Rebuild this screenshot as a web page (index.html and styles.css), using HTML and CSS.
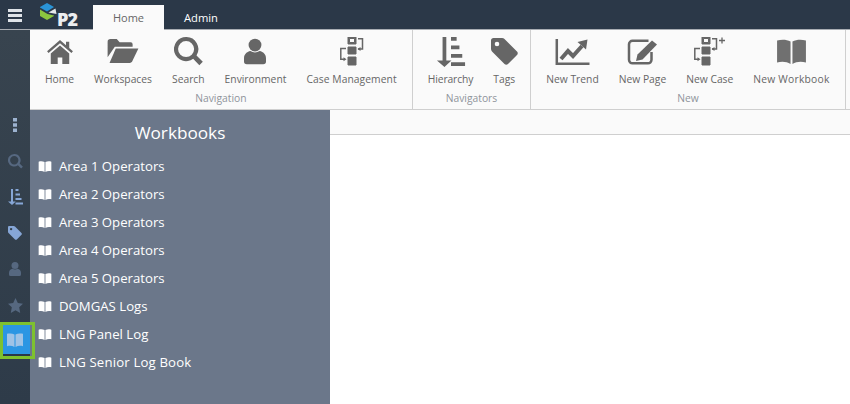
FILE: index.html
```html
<!DOCTYPE html>
<html lang="en">
<head>
<meta charset="utf-8">
<title>P2 Workbooks</title>
<link rel="stylesheet" href="styles.css">
</head>
<body>
<svg class="defs" width="0" height="0" aria-hidden="true">
  <defs>
    <symbol id="i-book" viewBox="0 0 30 26">
      <path d="M0 1.500C5 .3 10 .5 14 2.500V26C10 23.500 5 23 0 24.500ZM30 1.500C25 .3 20 .5 16 2.500V26C20 23.500 25 23 30 24.500Z"/>
    </symbol>
    <symbol id="i-search" viewBox="0 0 30 30">
      <path d="M12.500 0a12.500 12.500 0 1 0 7.300 22.600l6.400 6.600 3.600-3.600-6.500-6.500A12.500 12.500 0 0 0 12.500 0Zm0 4.200a8.300 8.300 0 1 1 0 16.600 8.300 8.300 0 0 1 0-16.600Z"/>
    </symbol>
    <symbol id="i-person" viewBox="0 0 24 28">
      <circle cx="12" cy="7" r="7"/>
      <path d="M7 13.500c3 2 7 2 10 0 4 .8 7 3.500 7 8V25a3 3 0 0 1-3 3H3a3 3 0 0 1-3-3v-3.500c0-4.500 3-7.200 7-8Z"/>
    </symbol>
    <symbol id="i-tag" viewBox="0 0 27 27">
      <path fill-rule="evenodd" d="M2.500 0H11c1 0 1.800.4 2.500 1L26 13.500c1 1 1 2.500 0 3.500L17 26c-1 1-2.500 1-3.500 0L1 13.500C.4 12.800 0 12 0 11V2.500C0 1 1 0 2.500 0ZM6 3.700a2.300 2.300 0 1 0 0 4.600 2.300 2.300 0 0 0 0-4.600Z"/>
    </symbol>
    <symbol id="i-hier" viewBox="0 0 30 32">
      <path d="M6 0h4v25h5.500L8 32 0 25h6ZM15 0h6v4h-6ZM15 9h9v4h-9ZM15 18h12v4H15ZM15 27h15v4H15Z"/>
    </symbol>
    <symbol id="i-case" viewBox="0 0 24 29">
      <path fill-rule="evenodd" d="M8 0h8v7H8Zm1.500 1.500v4h5v-4ZM8 10h8v7H8ZM8 20h8v8H8Z"/>
      <path fill="none" stroke-width="1.500" d="M18 1.800h4.500V12H18M6 11.500H.8v10.700H5"/>
      <path stroke="none" d="M17.500 12l3-2v4ZM6.500 22.200l-3-2v4Z"/>
    </symbol>
  </defs>
</svg>

<header class="topbar">
  <button class="menu" aria-label="Menu"><span></span><span></span><span></span></button>
  <div class="logo">
    <svg class="logo-mark" viewBox="0 0 17 18" width="17" height="18" aria-hidden="true">
      <path fill="#2a93d5" d="M7 0l7 4-7 4.500L0 4.500V4Z"/>
      <path fill="#8cc63f" d="M0 6.500l7.500 4.500 6.500 1.500V13l-7 4-7-4Z"/>
      <path fill="#e4e7ea" d="M8.500 9.500L15.500 5.500 16.500 11Z"/>
    </svg>
    <span class="logo-text">P2</span>
  </div>
  <nav class="tabs">
    <a class="tab tab-active">Home</a>
    <a class="tab tab-admin">Admin</a>
  </nav>
</header>

<div class="main">
  <aside class="rail">
    <div class="rail-item">
      <svg class="rail-dots" viewBox="0 0 4 14" width="4" height="14"><path d="M0 0h4v3.500H0ZM0 5.200h4v3.500H0ZM0 10.400h4v3.600H0Z"/></svg>
    </div>
    <div class="rail-item rail-dim"><svg width="15" height="15"><use href="#i-search"/></svg></div>
    <div class="rail-item rail-bright"><svg width="15" height="16"><use href="#i-hier"/></svg></div>
    <div class="rail-item rail-bright"><svg width="14" height="14"><use href="#i-tag"/></svg></div>
    <div class="rail-item rail-dim"><svg width="12" height="14"><use href="#i-person"/></svg></div>
    <div class="rail-item rail-dim">
      <svg viewBox="0 0 24 24" width="15" height="15"><path d="M12 0l3.700 8 8.300 1-6.100 5.800L19.500 24 12 19.500 4.500 24l1.600-9.200L0 9l8.300-1Z"/></svg>
    </div>
    <div class="rail-item rail-active"><svg width="16" height="14"><use href="#i-book"/></svg></div>
  </aside>

  <div class="content">
    <section class="ribbon">
      <div class="group">
        <div class="group-items">
          <div class="item">
            <div class="icon-box">
              <svg class="icon" viewBox="0 0 28 26" width="28" height="24">
                <path d="M14 0l6.500 5.700V2h3.500v6.800l4 3.500-1.600 1.900L14 3.400 1.600 14.200 0 12.300Z"/>
                <path d="M4 14.500L14 6l10 8.500V26h-7.500v-7h-5v7H4Z"/>
              </svg>
            </div>
            <span>Home</span>
          </div>
          <div class="item">
            <div class="icon-box">
              <svg class="icon" viewBox="0 0 32 26" width="32" height="25">
                <path d="M0 3a3 3 0 0 1 3-3h6.500l3 3.500H24a2 2 0 0 1 2 2V8H7.500L0 19Z"/>
                <path d="M8.500 10H32l-6.500 13.500a3 3 0 0 1-2.500 1.500H2Z"/>
              </svg>
            </div>
            <span>Workspaces</span>
          </div>
          <div class="item">
            <div class="icon-box"><svg class="icon" width="29" height="29"><use href="#i-search"/></svg></div>
            <span>Search</span>
          </div>
          <div class="item">
            <div class="icon-box"><svg class="icon" width="22" height="27"><use href="#i-person"/></svg></div>
            <span>Environment</span>
          </div>
          <div class="item item-case">
            <div class="icon-box"><svg class="icon icon-stroke" width="24" height="29"><use href="#i-case"/></svg></div>
            <span>Case Management</span>
          </div>
        </div>
        <div class="group-label">Navigation</div>
      </div>

      <div class="group">
        <div class="group-items">
          <div class="item item-narrow">
            <div class="icon-box"><svg class="icon" width="30" height="30"><use href="#i-hier"/></svg></div>
            <span>Hierarchy</span>
          </div>
          <div class="item">
            <div class="icon-box"><svg class="icon" width="27" height="27"><use href="#i-tag"/></svg></div>
            <span>Tags</span>
          </div>
        </div>
        <div class="group-label">Navigators</div>
      </div>

      <div class="group">
        <div class="group-items">
          <div class="item">
            <div class="icon-box">
              <svg class="icon icon-stroke" viewBox="0 0 34 26" width="35" height="26">
                <path fill="none" stroke-width="2.500" d="M1.300 0V24.700H34"/>
                <path fill="none" stroke-width="4" d="M5.500 20l7-8 5 5 9-10"/>
                <path stroke="none" d="M22 3l10-2.500-1.500 10Z"/>
              </svg>
            </div>
            <span>New Trend</span>
          </div>
          <div class="item">
            <div class="icon-box">
              <svg class="icon icon-stroke" viewBox="0 0 30 26" width="31" height="26">
                <path fill="none" stroke-width="2.500" d="M21 1.800H5a3.500 3.500 0 0 0-3.500 3.500v15.500A3.500 3.500 0 0 0 5 24.300h15.500a3.500 3.500 0 0 0 3.500-3.500V13"/>
                <path stroke="none" d="M24.500 1.500L29.500 5.500 15 20.500l-6.500 1.500 1.500-6.500Z"/>
              </svg>
            </div>
            <span>New Page</span>
          </div>
          <div class="item">
            <div class="icon-box">
              <svg class="icon icon-stroke" viewBox="0 0 31 29" width="31" height="29">
                <use href="#i-case" width="24" height="29"/>
                <path fill="none" stroke-width="1.300" d="M25 3.500h6M28 .5v6"/>
              </svg>
            </div>
            <span>New Case</span>
          </div>
          <div class="item item-wide">
            <div class="icon-box"><svg class="icon icon-book" width="31" height="25"><use href="#i-book"/></svg></div>
            <span>New Workbook</span>
          </div>
        </div>
        <div class="group-label">New</div>
      </div>
    </section>

    <div class="below">
      <section class="panel">
        <h1 class="panel-title">Workbooks</h1>
        <ul class="list">
          <li class="row"><svg width="14" height="11"><use href="#i-book"/></svg>Area 1 Operators</li>
          <li class="row"><svg width="14" height="11"><use href="#i-book"/></svg>Area 2 Operators</li>
          <li class="row"><svg width="14" height="11"><use href="#i-book"/></svg>Area 3 Operators</li>
          <li class="row"><svg width="14" height="11"><use href="#i-book"/></svg>Area 4 Operators</li>
          <li class="row"><svg width="14" height="11"><use href="#i-book"/></svg>Area 5 Operators</li>
          <li class="row"><svg width="14" height="11"><use href="#i-book"/></svg>DOMGAS Logs</li>
          <li class="row"><svg width="14" height="11"><use href="#i-book"/></svg>LNG Panel Log</li>
          <li class="row row-long"><svg width="14" height="11"><use href="#i-book"/></svg>LNG Senior Log Book</li>
        </ul>
      </section>
      <section class="page">
        <div class="page-bar"></div>
      </section>
    </div>
  </div>
</div>
<div class="rail-highlight"></div>
</body>
</html>
```

FILE: styles.css
```css
* { box-sizing: border-box; }
html, body { margin: 0; height: 100%; overflow: hidden; }
body { font-family: "Open Sans", "Noto Sans", sans-serif; background: #fff; position: relative; }
.defs { position: absolute; }

.topbar {
  height: 30px; display: flex; align-items: flex-end;
  background: #2b3848; border-bottom: 1px solid #a9adb3;
}
.menu {
  width: 30px; height: 29px; padding: 9px 8px 0; margin: 0; border: 0; background: none;
  display: flex; flex-direction: column; gap: 2px; align-self: flex-start;
}
.menu span { display: block; width: 14px; height: 3px; background: #dfe3e8; }
.logo { width: 63px; height: 29px; position: relative; display: flex; align-self: flex-start; padding: 3px 0 0 10px; }
.logo-text {
  position: absolute; left: 27px; top: 9px; color: #eceef0; font-weight: 800; font-size: 18px;
  line-height: 20px; letter-spacing: -.8px;
}
.tabs { display: flex; }
.tab { width: 71px; height: 25px; display: flex; align-items: center; justify-content: center; font-size: 11px; color: #fff; margin-bottom: -1px; }
.tab-active { background: #fafafa; color: #666; }
.tab-admin { padding-left: 3px; font-size: 11.200px; }

.main { display: flex; height: 374px; }
.rail {
  width: 30px; flex: none; padding-top: 77px;
  background: linear-gradient(#38444f, #2e3b49);
}
.rail-item { height: 36px; display: flex; align-items: center; justify-content: center; }
.rail-dots { fill: #9db3d0; }
.rail-dim { fill: #566880; }
.rail-bright { fill: #86a6d6; }
.rail-active { background: #2b96e3; fill: #9fc3e6; box-shadow: inset 0 -5px 0 #2b3848; padding-bottom: 2px; }

.content { flex: 1; display: flex; flex-direction: column; min-width: 0; }
.ribbon {
  height: 80px; display: flex; background: #fafafa; border-bottom: 1px solid #cfcfcf; flex: none;
}
.group {
  padding: 0 5px; border-right: 1px solid #cfcfcf; display: flex; flex-direction: column;
  align-items: center;
}
.group-items { display: flex; height: 59px; }
.item {
  padding: 0 10px; display: flex; flex-direction: column; align-items: center;
  font-size: 10.300px; line-height: 14px; color: #666; white-space: nowrap;
}
.item-case { letter-spacing: .07px; }
.item-wide { letter-spacing: .22px; }
.item-narrow { letter-spacing: -.1px; }
.icon-box { height: 42px; padding-top: 1px; margin: 0 -10px; display: flex; align-items: center; justify-content: center; }
.icon { fill: #666; display: block; }
.icon-stroke { stroke: #666; }
.icon-book { fill: #707070; }
.group-label { font-size: 10.300px; line-height: 14px; color: #8f949b; margin-top: 2px; }

.below { flex: 1; display: flex; min-height: 0; }
.panel { width: 300px; background: #6b778a; color: #fff; flex: none; }
.panel-title { margin: 0; font-size: 17.200px; font-weight: 400; line-height: 24px; text-align: center; padding-top: 11px; }
.list { list-style: none; margin: 0; padding: 7px 0 0 8px; }
.row { height: 28px; display: flex; align-items: center; gap: 7px; font-size: 13.200px; fill: #fff; }
.row-long { letter-spacing: .16px; }
.page { flex: 1; background: #fff; }
.page-bar { height: 25px; background: #fafafa; border-bottom: 1px solid #cfcfcf; }

.rail-highlight {
  position: absolute; left: 0; top: 322px; width: 35px; height: 37px;
  border: 3px solid #7ec12f; pointer-events: none;
}
```
